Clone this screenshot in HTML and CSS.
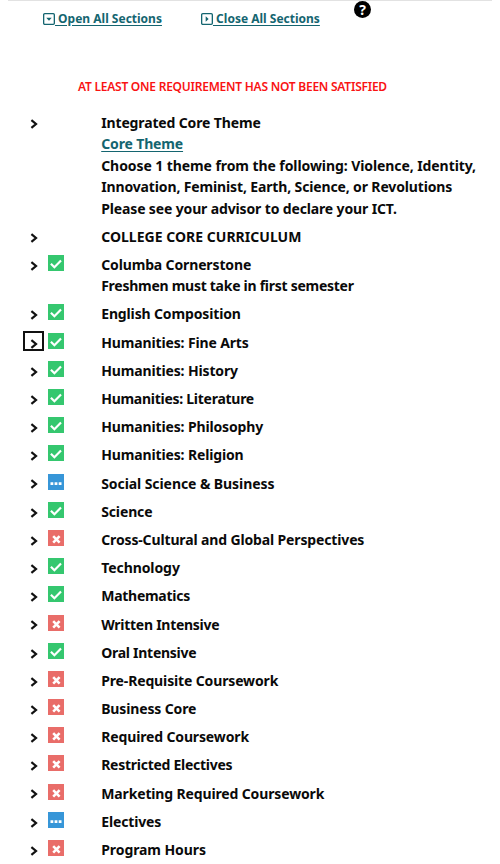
FILE: index.html
```html
<!DOCTYPE html>
<html lang="en">
	<head>
		<meta charset="UTF-8">
		<meta name="viewport" content="width=device-width,initial-scale=1" />
		<title>Degree Requirements</title>
		<link rel="stylesheet" href="styles.css">
	</head>
	<body>
		<!-- icons used by the rows -->
		<svg class="defs" width="0" height="0">
			<symbol id="arrow" viewBox="0 0 8 10"><path d="M1.4 1.2 L6 5 L1.4 8.8" fill="none" stroke="#111" stroke-width="2.2"/></symbol>
			<symbol id="done" viewBox="0 0 16 16"><path d="M2.9 8.8 L6.4 12.2 L13 5.5" fill="none" stroke="#fff" stroke-width="2.2"/></symbol>
			<symbol id="fail" viewBox="0 0 16 16"><path d="M5.2 6.2 L11.6 12.6 M11.6 6.2 L5.2 12.6" fill="none" stroke="#fff" stroke-width="2.6"/></symbol>
			<symbol id="progress" viewBox="0 0 16 16"><path d="M2.5 8.2h2.8v2.8h-2.8z M6.6 8.2h2.8v2.8h-2.8z M10.7 8.2h2.8v2.8h-2.8z" fill="#fff"/></symbol>
		</svg>

		<div id="box">
			<header>
				<a class="open" href="#"><svg width="12" height="12" viewBox="0 0 11 11"><rect x=".6" y=".6" width="9.8" height="9.8" rx="1" fill="none" stroke="#146570" stroke-width="1.2"/><path d="M3 4.3h5L5.5 7z" fill="#146570"/></svg><span>&nbsp;Open All Sections</span></a>
				<a class="close" href="#"><svg width="12" height="12" viewBox="0 0 11 11"><rect x=".6" y=".6" width="9.8" height="9.8" rx="1" fill="none" stroke="#146570" stroke-width="1.2"/><path d="M4.3 3v5L7 5.5z" fill="#146570"/></svg><span>&nbsp;Close All Sections</span></a>
				<span class="help">?</span>
			</header>

			<p class="warning">AT LEAST ONE REQUIREMENT HAS NOT BEEN SATISFIED</p>

			<ul>
				<li><b class="toggle"><svg><use href="#arrow"/></svg></b><i></i><div>Integrated Core Theme<br><a href="#">Core Theme</a><br><span class="note">Choose 1 theme from the following: Violence, Identity,</span><br>Innovation, Feminist, Earth, Science, or Revolutions<br>Please see your advisor to declare your ICT.</div></li>
				<li><b class="toggle"><svg><use href="#arrow"/></svg></b><i></i><div class="caps">COLLEGE CORE CURRICULUM</div></li>
				<li><b class="toggle"><svg><use href="#arrow"/></svg></b><i class="done"><svg><use href="#done"/></svg></i><div>Columba Cornerstone<br><span class="tight">Freshmen must take in first semester</span></div></li>
				<li><b class="toggle"><svg><use href="#arrow"/></svg></b><i class="done"><svg><use href="#done"/></svg></i><div>English Composition</div></li>
				<li><b class="toggle focus"><svg><use href="#arrow"/></svg></b><i class="done"><svg><use href="#done"/></svg></i><div>Humanities: Fine Arts</div></li>
				<li><b class="toggle"><svg><use href="#arrow"/></svg></b><i class="done"><svg><use href="#done"/></svg></i><div>Humanities: History</div></li>
				<li><b class="toggle"><svg><use href="#arrow"/></svg></b><i class="done"><svg><use href="#done"/></svg></i><div class="tight">Humanities: Literature</div></li>
				<li><b class="toggle"><svg><use href="#arrow"/></svg></b><i class="done"><svg><use href="#done"/></svg></i><div>Humanities: Philosophy</div></li>
				<li><b class="toggle"><svg><use href="#arrow"/></svg></b><i class="done"><svg><use href="#done"/></svg></i><div>Humanities: Religion</div></li>
				<li><b class="toggle"><svg><use href="#arrow"/></svg></b><i class="progress"><svg><use href="#progress"/></svg></i><div class="note">Social Science &amp; Business</div></li>
				<li><b class="toggle"><svg><use href="#arrow"/></svg></b><i class="done"><svg><use href="#done"/></svg></i><div>Science</div></li>
				<li><b class="toggle"><svg><use href="#arrow"/></svg></b><i class="fail"><svg><use href="#fail"/></svg></i><div>Cross-Cultural and Global Perspectives</div></li>
				<li><b class="toggle"><svg><use href="#arrow"/></svg></b><i class="done"><svg><use href="#done"/></svg></i><div class="note">Technology</div></li>
				<li><b class="toggle"><svg><use href="#arrow"/></svg></b><i class="done"><svg><use href="#done"/></svg></i><div class="tight">Mathematics</div></li>
				<li><b class="toggle"><svg><use href="#arrow"/></svg></b><i class="fail"><svg><use href="#fail"/></svg></i><div class="tight">Written Intensive</div></li>
				<li><b class="toggle"><svg><use href="#arrow"/></svg></b><i class="done"><svg><use href="#done"/></svg></i><div class="tight">Oral Intensive</div></li>
				<li><b class="toggle"><svg><use href="#arrow"/></svg></b><i class="fail"><svg><use href="#fail"/></svg></i><div>Pre-Requisite Coursework</div></li>
				<li><b class="toggle"><svg><use href="#arrow"/></svg></b><i class="fail"><svg><use href="#fail"/></svg></i><div>Business Core</div></li>
				<li><b class="toggle"><svg><use href="#arrow"/></svg></b><i class="fail"><svg><use href="#fail"/></svg></i><div>Required Coursework</div></li>
				<li><b class="toggle"><svg><use href="#arrow"/></svg></b><i class="fail"><svg><use href="#fail"/></svg></i><div class="tight">Restricted Electives</div></li>
				<li><b class="toggle"><svg><use href="#arrow"/></svg></b><i class="fail"><svg><use href="#fail"/></svg></i><div>Marketing Required Coursework</div></li>
				<li><b class="toggle"><svg><use href="#arrow"/></svg></b><i class="progress"><svg><use href="#progress"/></svg></i><div>Electives</div></li>
				<li><b class="toggle"><svg><use href="#arrow"/></svg></b><i class="fail"><svg><use href="#fail"/></svg></i><div class="note">Program Hours</div></li>
			</ul>
		</div>
	</body>
</html>
```
FILE: styles.css
```css
*{
	margin:0; padding:0;
	list-style: none;
	box-sizing: border-box;
}

html,body{
	height:864px;
	overflow: hidden;
	background:white;
}

body{
	font:bold 14px/21.4px "Noto Sans","Open Sans",sans-serif;
	color:#0a0a0a;
	white-space: nowrap;
}

.defs{
	display:block;
}

a{
	color:#146570;
	text-underline-offset: 2px;
}

header{
	display:flex;
	align-items: flex-start;
	height:76px;
	margin:0 8px;
	padding-left:35px;
	border-top:1px solid #e2e2e2;
	font-size:12px;
	line-height:16px;
}

header a{
	display:flex;
	margin-top:10px;
	text-decoration: none;
}

header a span{
	text-decoration: underline;
}

header a svg{
	margin-top:2px;
}

.open{
	width:158px;
}

.close{
	width:153px;
}

.help{
	width:17px;
	height:17px;
	border-radius:50%;
	background:black;
	color:white;
	font-size:14px;
	line-height:17px;
	text-align: center;
}

.warning{
	height:32.5px;
	padding-left:78px;
	color:#f91313;
	font-size:12px;
	font-weight:600;
	line-height:21px;
	letter-spacing:-.24px;
}

ul{
	letter-spacing:-.14px;
}

.note{
	letter-spacing:-.08px;
}

.caps{
	letter-spacing:.02px;
}

.tight{
	letter-spacing:-.27px;
}

li{
	display:flex;
	padding:3.4px 0;
}

.toggle{
	display:flex;
	width:21px;
	height:20px;
	margin:.8px 5px 0 23px;
	padding:6px 0 0 7px;
}

.toggle svg{
	width:8px;
	height:10px;
}

.focus{
	margin-top:-1px;
	padding:6px 0 0 5px;
	border:2px solid #111;
}

i{
	width:16px;
	height:16px;
	margin:1px 37px 0 -.8px;
}

i svg{
	display:block;
	width:16px;
	height:16px;
}

.done{
	background:#35c76f;
}

.fail{
	background:#e96d69;
}

.progress{
	background:#3796d8;
}
```
